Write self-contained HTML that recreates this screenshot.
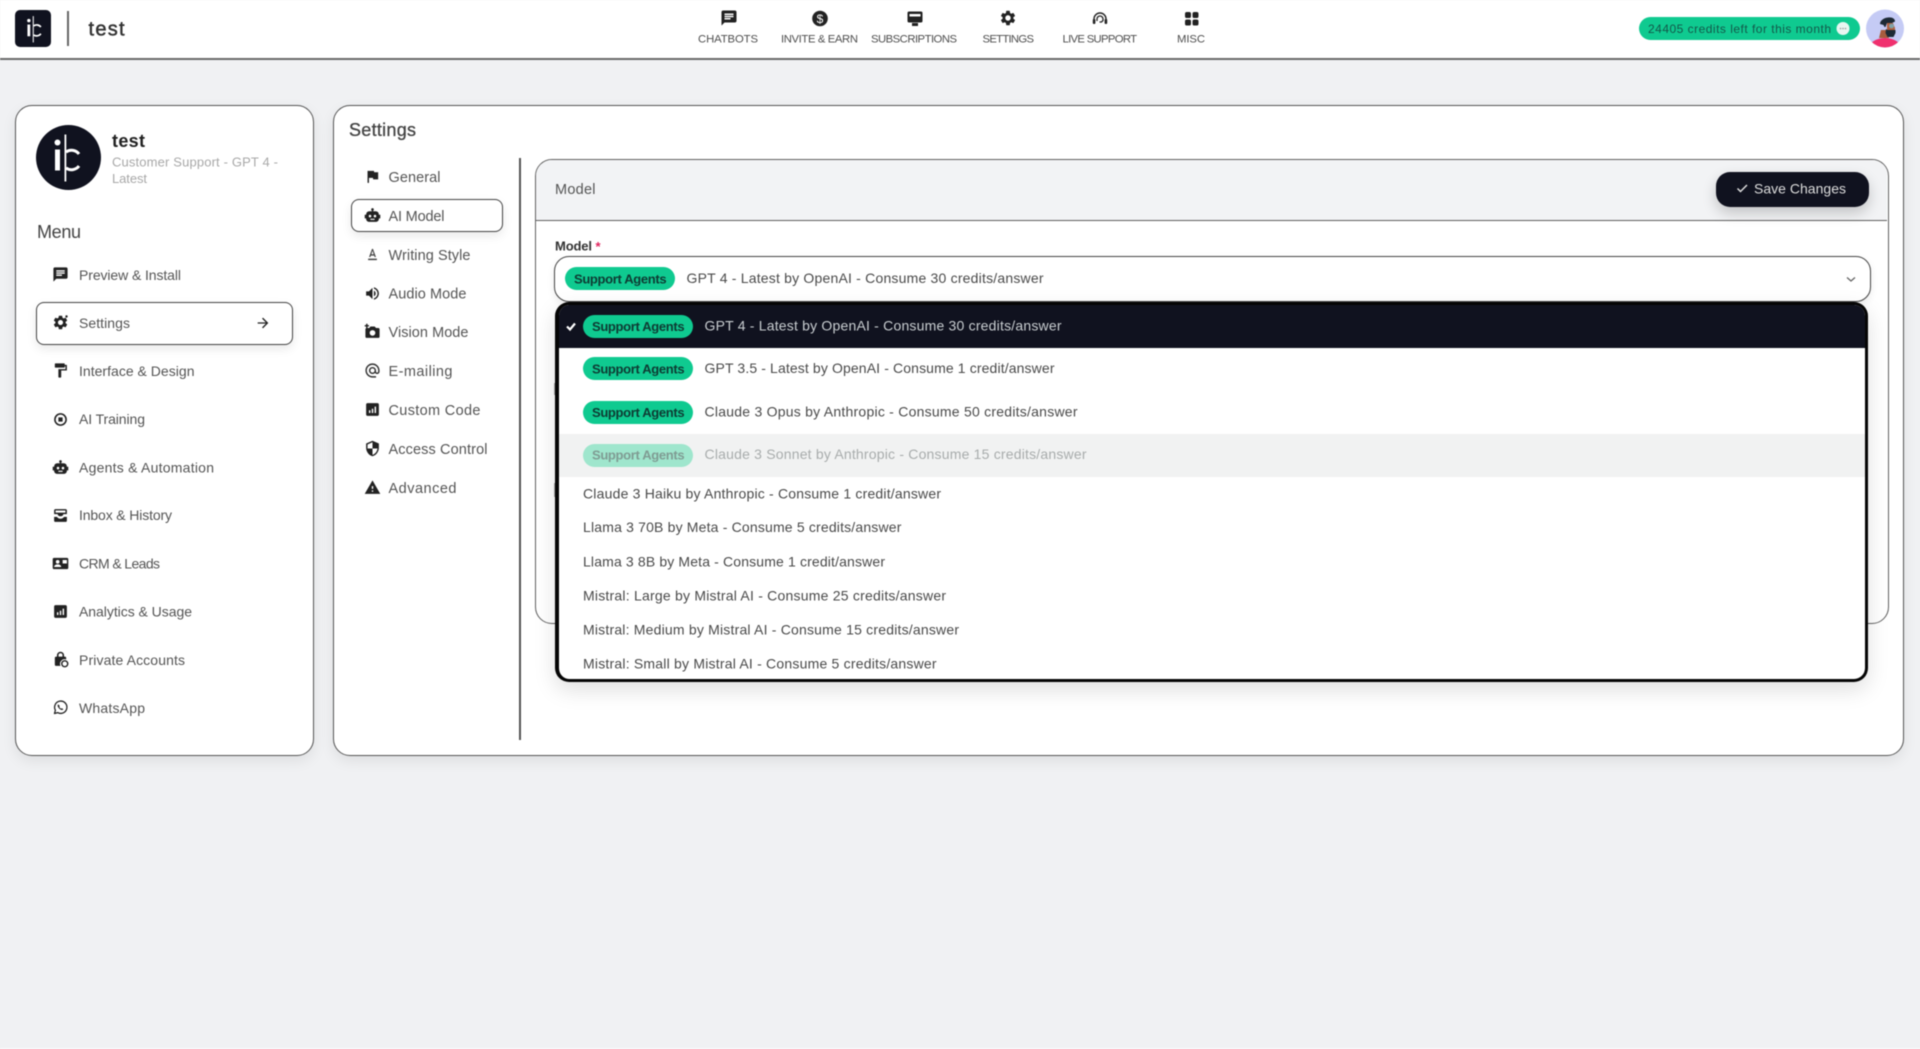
<!DOCTYPE html>
<html lang="en">
<head>
<meta charset="utf-8">
<title>test - Settings</title>
<style>
html,body{margin:0;padding:0;width:1920px;height:1049px;overflow:hidden;background:#f0f1f3}
#p{position:absolute;left:0;top:0;width:1920px;height:1049px;background:#f0f1f3;overflow:hidden;filter:blur(.45px);font-family:"Liberation Sans",sans-serif}
#p div{position:absolute;box-sizing:border-box}
.top{left:0;top:0;width:1920px;height:60px;background:#fff;border-bottom:2px solid #6b6b6b}
.card{background:#fff;border:1.5px solid #555;border-radius:17px;box-shadow:0 5px 14px rgba(0,0,0,.08)}
.sel{background:#fff;border:1.5px solid #444;border-radius:8px;box-shadow:0 4px 10px rgba(0,0,0,.09)}
.pill{background:#0fca90;border-radius:12px}
svg.o{position:absolute;left:0;top:0}
text{font-family:"Liberation Sans",sans-serif}
.n{font-size:11.3px;fill:#4f4f4f}
.i{font-size:14px;fill:#555}
.s{font-size:14.5px;fill:#555}
.a{font-size:13px;font-weight:bold;fill:#0e3b33}
.t{font-size:14px;fill:#4a4a4a}
.m{stroke-width:.3px}
</style>
</head>
<body>
<div id="p">
  <div class="top"></div>
  <div style="left:15px;top:10px;width:36px;height:37px;background:#10121f;border-radius:5px"></div>
  <div style="left:67px;top:11px;width:2px;height:35px;background:#666"></div>
  <div class="pill" style="left:1639px;top:17px;width:221px;height:23px"></div>

  <div class="card" style="left:15px;top:105px;width:299px;height:651px"></div>
  <div class="sel" style="left:36px;top:302px;width:257px;height:43px"></div>

  <div class="card" style="left:333px;top:105px;width:1571px;height:651px"></div>
  <div style="left:519px;top:158px;width:2px;height:582px;background:#555"></div>
  <div class="sel" style="left:351px;top:199px;width:152px;height:33px"></div>

  <div style="left:535px;top:159px;width:1354px;height:465px;background:#fff;border:1.5px solid #606060;border-radius:17px;overflow:hidden">
    <div style="left:0;top:0;width:1351px;height:61px;background:#f2f3f5;border-bottom:1.5px solid #606060"></div>
  </div>
  <div style="left:1716px;top:172px;width:153px;height:35px;background:#10121f;border-radius:14px;box-shadow:0 6px 14px rgba(0,0,0,.2)"></div>

  <div style="left:554px;top:383px;width:2px;height:12px;background:#aaa"></div>
  <div style="left:554px;top:483px;width:2px;height:14px;background:#aaa"></div>

  <div style="left:554px;top:256px;width:1317px;height:46px;background:#fff;border:1.5px solid #454545;border-radius:15px;box-shadow:0 3px 8px rgba(0,0,0,.08)"></div>
  <div class="pill" style="left:565px;top:267px;width:110px;height:23px"></div>

  <div style="left:555px;top:302px;width:1313px;height:380px;background:#fff;border:3px solid #050505;border-left-width:4px;border-radius:14px;box-shadow:0 8px 22px rgba(0,0,0,.13);overflow:hidden">
    <div style="left:0;top:0;width:1306px;height:43px;background:#10121f"></div>
    <div style="left:0;top:129px;width:1306px;height:43px;background:#f1f2f2"></div>
    <div class="pill" style="left:24px;top:10px;width:110px;height:23px"></div>
    <div class="pill" style="left:24px;top:52px;width:110px;height:23px"></div>
    <div class="pill" style="left:24px;top:96px;width:110px;height:23px"></div>
    <div class="pill" style="left:24px;top:139px;width:110px;height:23px;background:#9fe6cd"></div>
  </div>

  <div style="left:0;top:1048px;width:1920px;height:1px;background:#fbfbfb"></div>

  <svg class="o" width="1920" height="1049" viewBox="0 0 1920 1049" xmlns="http://www.w3.org/2000/svg">
    <defs>
      <symbol id="logo" viewBox="-25 -25 50 50" overflow="visible">
        <rect x="-13.5" y="-8" width="5" height="21" fill="#fff"/>
        <circle cx="-11" cy="-15" r="3" fill="#fff"/>
        <rect x="-4" y="-23" width="1.8" height="47" fill="#fff"/>
        <path d="M10.5-3.5A9.5 9.5 0 0 0-2.5-5.5M-2.5 10.5A9.5 9.5 0 0 0 10.5 8.5" fill="none" stroke="#fff" stroke-width="3"/>
      </symbol>
      <symbol id="chat" viewBox="0 0 24 24"><path fill-rule="evenodd" d="M20 2H4c-1.1 0-2 .9-2 2v18l4-4h14c1.1 0 2-.9 2-2V4c0-1.1-.9-2-2-2zM6 9h12v2H6V9zm8 5H6v-2h8v2zm4-6H6V6h12v2z"/></symbol>
      <symbol id="gear" viewBox="0 0 24 24"><path d="M19.14 12.94c.04-.3.06-.61.06-.94 0-.32-.02-.64-.07-.94l2.03-1.58a.49.49 0 0 0 .12-.61l-1.92-3.32a.488.488 0 0 0-.59-.22l-2.39.96c-.5-.38-1.03-.7-1.62-.94l-.36-2.54a.484.484 0 0 0-.48-.41h-3.84c-.24 0-.43.17-.47.41l-.36 2.54c-.59.24-1.13.57-1.62.94l-2.39-.96c-.22-.08-.47 0-.59.22L2.74 8.87c-.12.21-.08.47.12.61l2.03 1.58c-.05.3-.09.63-.09.94s.02.64.07.94l-2.03 1.58a.49.49 0 0 0-.12.61l1.92 3.32c.12.22.37.29.59.22l2.39-.96c.5.38 1.03.7 1.62.94l.36 2.54c.05.24.24.41.48.41h3.84c.24 0 .44-.17.47-.41l.36-2.54c.59-.24 1.13-.56 1.62-.94l2.39.96c.22.08.47 0 .59-.22l1.92-3.32c.12-.22.07-.47-.12-.61l-2.01-1.58zM12 15.6c-1.98 0-3.6-1.62-3.6-3.6s1.62-3.6 3.6-3.6 3.6 1.62 3.6 3.6-1.62 3.6-3.6 3.6z"/></symbol>
      <symbol id="bot" viewBox="0 0 24 24"><path fill-rule="evenodd" d="M12 1.5a2 2 0 0 1 1 3.7V6h3.5A4.5 4.5 0 0 1 21 10.5V11h2v5h-2v1a4 4 0 0 1-4 4H7a4 4 0 0 1-4-4v-1H1v-5h2v-.5A4.5 4.5 0 0 1 7.5 6H11v-.8a2 2 0 0 1 1-3.7zM8.5 11a1.8 1.8 0 1 0 0 3.6 1.8 1.8 0 0 0 0-3.6zm7 0a1.8 1.8 0 1 0 0 3.6 1.8 1.8 0 0 0 0-3.6zM9 16.5v1.6h6v-1.6z"/></symbol>
      <symbol id="analytics" viewBox="0 0 24 24"><path fill-rule="evenodd" d="M19 3H5c-1.1 0-2 .9-2 2v14c0 1.1.9 2 2 2h14c1.1 0 2-.9 2-2V5c0-1.1-.9-2-2-2zM9 17H7v-4h2v4zm4 0h-2v-6h2v6zm4 0h-2V8h2v9z"/></symbol>
      <symbol id="flag" viewBox="0 0 24 24"><path d="M14.4 6L14 4H5v17h2v-7h5.6l.4 2h7V6z"/></symbol>
      <symbol id="write" viewBox="0 0 24 24"><path fill-rule="evenodd" d="M5 21h14v-2.4H5V21zm4.5-7.2h5l.9 2.2h2.1L12.75 3h-1.5L6.5 16h2.1l.9-2.2zM12 6l1.87 5.6h-3.74L12 6z"/></symbol>
      <symbol id="vol" viewBox="0 0 24 24"><path d="M3 9v6h4l5 5V4L7 9H3zm13.5 3c0-1.77-1.02-3.29-2.5-4.03v8.05c1.48-.73 2.5-2.25 2.5-4.02zM14 3.23v2.06c2.89.86 5 3.54 5 6.71s-2.11 5.85-5 6.71v2.06c4.01-.91 7-4.49 7-8.77s-2.99-7.86-7-8.77z"/></symbol>
      <symbol id="cam" viewBox="0 0 24 24"><path fill-rule="evenodd" d="M4 7h3.5L9 5h6l2 2h3a2 2 0 0 1 2 2v10a2 2 0 0 1-2 2H4a2 2 0 0 1-2-2V9a2 2 0 0 1 2-2zm8 3a4 4 0 1 0 0 8 4 4 0 0 0 0-8zM3 1h2v2h2v2H5v2H3V5H1V3h2z"/></symbol>
      <symbol id="at" viewBox="0 0 24 24"><path fill-rule="evenodd" d="M12 2C6.48 2 2 6.48 2 12s4.48 10 10 10h5v-2h-5c-4.34 0-8-3.66-8-8s3.66-8 8-8 8 3.66 8 8v1.43c0 .79-.71 1.57-1.5 1.57s-1.5-.78-1.5-1.57V12c0-2.76-2.24-5-5-5s-5 2.24-5 5 2.24 5 5 5c1.38 0 2.64-.56 3.54-1.47.65.89 1.77 1.47 2.96 1.47 1.97 0 3.5-1.6 3.5-3.57V12c0-5.52-4.48-10-10-10zm0 13c-1.66 0-3-1.34-3-3s1.34-3 3-3 3 1.34 3 3-1.34 3-3 3z"/></symbol>
      <symbol id="shield" viewBox="0 0 24 24"><path d="M12 1L3 5v6c0 5.55 3.84 10.74 9 12 5.16-1.26 9-6.45 9-12V5l-9-4zm0 10.99h7c-.53 4.12-3.28 7.79-7 8.94V12H5V6.3l7-3.11v8.8z"/></symbol>
      <symbol id="warn" viewBox="0 0 24 24"><path fill-rule="evenodd" d="M1 21h22L12 2 1 21zm12-3h-2v-2h2v2zm0-4h-2v-4h2v4z"/></symbol>
      <symbol id="roller" viewBox="0 0 24 24"><path d="M18 4V3c0-.55-.45-1-1-1H5c-.55 0-1 .45-1 1v4c0 .55.45 1 1 1h12c.55 0 1-.45 1-1V6h1v4H9v11c0 .55.45 1 1 1h2c.55 0 1-.45 1-1v-9h8V4h-3z"/></symbol>
      <symbol id="chip" viewBox="0 0 24 24"><path fill-rule="evenodd" d="M12 3a9 9 0 1 1 0 18 9 9 0 0 1 0-18zm0 2.2a6.8 6.8 0 1 0 0 13.6 6.8 6.8 0 0 0 0-13.6zM9 9h6v6H9z"/></symbol>
      <symbol id="inbox" viewBox="0 0 24 24"><path fill-rule="evenodd" d="M5 3h14a2 2 0 0 1 2 2v5h-5c0 2-2 3-4 3s-4-1-4-3H3V5a2 2 0 0 1 2-2zM3 14h4c1 1.6 3 2.6 5 2.6s4-1 5-2.6h4v5a2 2 0 0 1-2 2H5a2 2 0 0 1-2-2v-5zM5 5v3h14V5z"/></symbol>
      <symbol id="crm" viewBox="0 0 24 24"><path fill-rule="evenodd" d="M3 4h18a2 2 0 0 1 2 2v12a2 2 0 0 1-2 2H3a2 2 0 0 1-2-2V6a2 2 0 0 1 2-2zm5 3a2.6 2.6 0 1 0 0 5.2A2.6 2.6 0 0 0 8 7zm-5 10h10c0-2.4-2.4-3.8-5-3.8S3 14.600 3 17zM15 7v5h6V7z"/></symbol>
      <symbol id="lock" viewBox="0 0 24 24"><path fill-rule="evenodd" d="M12 1a5 5 0 0 1 5 5v2h1a2 2 0 0 1 2 2v2a6.500 6.500 0 0 0-8 9H6a2 2 0 0 1-2-2V10a2 2 0 0 1 2-2h1V6a5 5 0 0 1 5-5zm0 2.200A2.800 2.800 0 0 0 9.200 6v2h5.600V6A2.800 2.800 0 0 0 12 3.200z"/><circle cx="18" cy="18" r="4.200" fill="none" stroke="#222" stroke-width="2"/></symbol>
      <symbol id="wa" viewBox="0 0 24 24"><path d="M3.500 20.500l1.300-4.600A8.700 8.700 0 1 1 8.100 19.200z" fill="none" stroke="#222" stroke-width="1.800" stroke-linejoin="round"/><path d="M9 7.500c-1 .6-1.300 1.800-.8 3 .9 2.200 2.600 3.900 4.800 4.800 1.200.5 2.500.2 3-.8l-2.200-1.600-1 .8c-1.100-.6-2-1.500-2.600-2.600l.8-1z"/></symbol>
      <symbol id="arrow" viewBox="0 0 24 24"><path d="M12 4l-1.410 1.410L16.170 11H4v2h12.170l-5.580 5.590L12 20l8-8z"/></symbol>
    </defs>

    <!-- logos -->
    <use href="#logo" x="21" y="15" width="28" height="28"/>
    <circle cx="68.500" cy="157.500" r="32.500" fill="#10121f"/>
    <use href="#logo" x="43.500" y="132.500" width="50" height="50"/>

    <text x="88.500" y="35.700" font-size="20" fill="#333" stroke="#333" stroke-width=".5" textLength="36">test</text>

    <!-- nav -->
    <g fill="#222">
      <use href="#chat" x="720" y="9" width="18" height="18"/>
      <circle cx="820" cy="18.500" r="7.800"/>
      <text x="820" y="23" font-size="12" fill="#fff" text-anchor="middle">$</text>
      <g transform="translate(0,1)">
        <path fill-rule="evenodd" d="M909 10.500h12a1.500 1.500 0 0 1 1.500 1.500v8a1.500 1.500 0 0 1-1.500 1.500h-12a1.500 1.500 0 0 1-1.500-1.500v-8a1.500 1.500 0 0 1 1.500-1.500zm.5 2.500v2.500h11V13z"/>
        <rect x="912" y="22" width="6" height="3"/>
      </g>
      <use href="#gear" x="999" y="9" width="18" height="18"/>
      <g transform="translate(0,1.500)">
        <path d="M1094 21v-3.500a6 6 0 0 1 12 0V21" fill="none" stroke="#222" stroke-width="1.400"/>
        <path d="M1097 19.500v-2a3 3 0 0 1 6 0v1.500l-1.500 1.500h-2" fill="none" stroke="#222" stroke-width="1.300"/>
        <rect x="1092.800" y="17.500" width="2.600" height="5" rx="1"/>
        <rect x="1104.600" y="17.500" width="2.600" height="5" rx="1"/>
      </g>
      <rect x="1185" y="12" width="6" height="6" rx="1.800"/>
      <rect x="1192.500" y="12" width="6" height="6" rx="1.800"/>
      <rect x="1185" y="19.500" width="6" height="6" rx="1.800"/>
      <rect x="1192.500" y="19.500" width="6" height="6" rx="1.800"/>
    </g>
    <text class="n" x="698" y="42.300" textLength="60">CHATBOTS</text>
    <text class="n" x="781" y="42.300" textLength="77">INVITE &amp; EARN</text>
    <text class="n" x="871" y="42.300" textLength="86">SUBSCRIPTIONS</text>
    <text class="n" x="982.500" y="42.300" textLength="51.500">SETTINGS</text>
    <text class="n" x="1062.500" y="42.300" textLength="74.500">LIVE SUPPORT</text>
    <text class="n" x="1177" y="42.300" textLength="28">MISC</text>

    <!-- credits -->
    <text x="1648" y="33" font-size="12" fill="#14584a" textLength="183">24405 credits left for this month</text>
    <circle cx="1843" cy="28.500" r="6.500" fill="#e8f6f1"/>
    <circle cx="1840.500" cy="28.500" r=".8" fill="#999"/><circle cx="1843" cy="28.500" r=".8" fill="#999"/><circle cx="1845.500" cy="28.500" r=".8" fill="#999"/>
    <clipPath id="av"><circle cx="1885" cy="28.500" r="19"/></clipPath>
    <g clip-path="url(#av)">
      <rect x="1866" y="9" width="38" height="39" fill="#c5cbf5"/>
      <path d="M1881 30h6l2 8h-10z" fill="#a85c3e"/>
      <ellipse cx="1885" cy="50" rx="17" ry="12" fill="#f0306e"/>
      <path d="M1887 23h6l2 5v3h-8z" fill="#b0603f"/>
      <path d="M1886 29l1.500 1h8v3l-2 4h-6l-2-4z" fill="#1d2a35"/>
      <path d="M1880 24c0-3 3-6 8-6.500 4-.5 7 1 7 4l-3 1.500h-5l-1.500 4h-1l-1-2z" fill="#1d2a35"/>
      <ellipse cx="1891.500" cy="26" rx="2.500" ry="2.300" fill="#7fa3a8"/>
    </g>

    <!-- left card -->
    <text x="112" y="147" font-size="18" font-weight="bold" fill="#222" textLength="33">test</text>
    <text x="112" y="166.500" font-size="13" fill="#a8a8a8" textLength="166">Customer Support - GPT 4 -</text>
    <text x="112" y="183" font-size="13" fill="#a8a8a8" textLength="35">Latest</text>
    <text x="37" y="238" font-size="18" fill="#444" textLength="44">Menu</text>

    <g fill="#222">
      <use href="#chat" x="52" y="266" width="17" height="17"/>
      <use href="#gear" x="52" y="314" width="17" height="17"/>
      <circle cx="66.500" cy="316.500" r="1.200"/>
      <use href="#roller" x="52" y="362" width="17" height="17"/>
      <use href="#chip" x="52" y="411" width="17" height="17"/>
      <use href="#bot" x="52" y="459" width="17" height="17"/>
      <use href="#inbox" x="52" y="507" width="17" height="17"/>
      <use href="#crm" x="52" y="555" width="17" height="17"/>
      <use href="#analytics" x="52" y="603" width="17" height="17"/>
      <use href="#lock" x="52" y="651" width="17" height="17"/>
      <use href="#wa" x="52" y="699" width="17" height="17"/>
      <use href="#arrow" x="255" y="315" width="16" height="16"/>
    </g>
    <text class="i" x="79" y="280" textLength="102">Preview &amp; Install</text>
    <text class="i" x="79" y="328" textLength="51">Settings</text>
    <text class="i" x="79" y="376" textLength="115.500">Interface &amp; Design</text>
    <text class="i" x="79" y="424" textLength="66">AI Training</text>
    <text class="i" x="79" y="472.500" textLength="135">Agents &amp; Automation</text>
    <text class="i" x="79" y="520" textLength="93">Inbox &amp; History</text>
    <text class="i" x="79" y="568.500" textLength="81">CRM &amp; Leads</text>
    <text class="i" x="79" y="616.500" textLength="113">Analytics &amp; Usage</text>
    <text class="i" x="79" y="665" textLength="106">Private Accounts</text>
    <text class="i" x="79" y="713" textLength="66">WhatsApp</text>

    <!-- settings -->
    <text x="349" y="136" font-size="18" fill="#444" stroke="#444" class="m" textLength="67">Settings</text>
    <g fill="#222">
      <use href="#flag" x="364" y="168" width="17" height="17"/>
      <use href="#bot" x="364" y="207" width="17" height="17"/>
      <use href="#write" x="365" y="247" width="15" height="15" fill="#444"/>
      <use href="#vol" x="364" y="285" width="17" height="17"/>
      <use href="#cam" x="364" y="323" width="17" height="17"/>
      <use href="#at" x="364" y="362" width="17" height="17" fill="#333"/>
      <use href="#analytics" x="364" y="401" width="17" height="17"/>
      <use href="#shield" x="364" y="440" width="17" height="17"/>
      <use href="#warn" x="364" y="479" width="17" height="17"/>
    </g>
    <text class="s" x="388.500" y="182" textLength="52">General</text>
    <text class="s" x="388.500" y="221" textLength="56">AI Model</text>
    <text class="s" x="388.500" y="260" textLength="82">Writing Style</text>
    <text class="s" x="388.500" y="298.500" textLength="78">Audio Mode</text>
    <text class="s" x="388.500" y="337" textLength="80">Vision Mode</text>
    <text class="s" x="388.500" y="376" textLength="64">E-mailing</text>
    <text class="s" x="388.500" y="415" textLength="92">Custom Code</text>
    <text class="s" x="388.500" y="454" textLength="99">Access Control</text>
    <text class="s" x="388.500" y="493" textLength="68">Advanced</text>

    <text class="s" x="555" y="194" textLength="40.500">Model</text>
    <path d="M1737.500 188.500l3 3 6.500-6.500" fill="none" stroke="#ddd" stroke-width="1.500"/>
    <text x="1754" y="193.700" font-size="14" fill="#dcdcdc" textLength="92">Save Changes</text>

    <text x="555" y="250.500" font-size="13" font-weight="bold" fill="#333" textLength="37">Model</text>
    <text x="595.500" y="251" font-size="13" font-weight="bold" fill="#e0245e">*</text>

    <text class="a" x="574" y="283.700" textLength="92.600">Support Agents</text>
    <text class="t" x="686.500" y="283" textLength="357">GPT 4 - Latest by OpenAI - Consume 30 credits/answer</text>
    <path d="M1847 277.500l4 3.500 4-3.500" fill="none" stroke="#666" stroke-width="1.300"/>

    <path d="M567 326.500l3 3 5-6" fill="none" stroke="#fff" stroke-width="2.200"/>
    <text class="a" x="592" y="331" textLength="92.600">Support Agents</text>
    <text class="t" x="704.500" y="330.300" textLength="357" style="fill:#c9ced1">GPT 4 - Latest by OpenAI - Consume 30 credits/answer</text>
    <text class="a" x="592" y="373.700" textLength="92.600">Support Agents</text>
    <text class="t" x="704.500" y="373" textLength="350">GPT 3.5 - Latest by OpenAI - Consume 1 credit/answer</text>
    <text class="a" x="592" y="417" textLength="92.600">Support Agents</text>
    <text class="t" x="704.500" y="416.300" textLength="373">Claude 3 Opus by Anthropic - Consume 50 credits/answer</text>
    <text class="a" x="592" y="459.700" textLength="92.600" style="fill:#7f9c93">Support Agents</text>
    <text class="t" x="704.500" y="459" textLength="382" style="fill:#a8acac">Claude 3 Sonnet by Anthropic - Consume 15 credits/answer</text>

    <text class="t" x="583" y="498.300" textLength="358">Claude 3 Haiku by Anthropic - Consume 1 credit/answer</text>
    <text class="t" x="583" y="532" textLength="318.400">Llama 3 70B by Meta - Consume 5 credits/answer</text>
    <text class="t" x="583" y="566.300" textLength="302">Llama 3 8B by Meta - Consume 1 credit/answer</text>
    <text class="t" x="583" y="600.300" textLength="363">Mistral: Large by Mistral AI - Consume 25 credits/answer</text>
    <text class="t" x="583" y="634.300" textLength="376">Mistral: Medium by Mistral AI - Consume 15 credits/answer</text>
    <text class="t" x="583" y="668.300" textLength="353.600">Mistral: Small by Mistral AI - Consume 5 credits/answer</text>
  </svg>
</div>
</body>
</html>
